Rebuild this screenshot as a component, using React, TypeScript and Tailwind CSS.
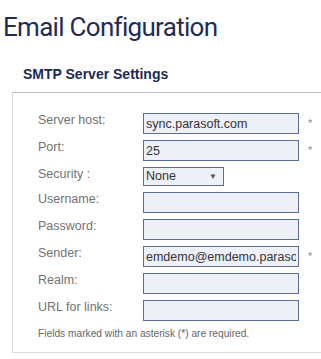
import React from 'react'

const fields = [
    { label: 'Server host:', value: 'sync.parasoft.com', required: true },
    { label: 'Port:', value: '25', required: true },
    { label: 'Security :', select: 'None' },
    { label: 'Username:', value: '' },
    { label: 'Password:', value: '' },
    { label: 'Sender:', value: 'emdemo@emdemo.parasoft.com', required: true },
    { label: 'Realm:', value: '' },
    { label: 'URL for links:', value: '' },
]

export default function App() {
    return (
        <div className="w-[321px] h-[359px] overflow-hidden bg-white font-['Liberation_Sans',Arial,sans-serif]">
            <h1 className="pt-[12px] pl-[3px] text-[26px] leading-[30px] tracking-[-0.7px] text-[#1f2d56] font-['Roboto',sans-serif] whitespace-nowrap">
                Email Configuration
            </h1>

            <h2 className="mt-[24px] pl-[23px] text-[14px] leading-[16px] font-bold text-[#1c2a52]">
                SMTP Server Settings
            </h2>

            {/* settings box */}
            <div className="mt-[10px] ml-[12px] w-[330px] border border-[#d9dbde] border-t-[#b9c0c9] pt-[20px] pl-[25px] pb-[12px]">
                <div className="flex flex-col gap-[6px]">
                    {fields.map((f) => (
                        <div key={f.label} className="flex items-start text-[12.5px] leading-[15px]">
                            <div className="w-[105px] text-[#727272] whitespace-nowrap">{f.label}</div>
                            {f.select ? (
                                <div className="w-[81px] h-[19px] border border-[#5d6c97] bg-[#eef0f8] flex items-center justify-between pl-[2px] pr-[6px] text-[#333333]">
                                    <span>{f.select}</span>
                                    <span className="text-[8px] text-[#555555]">▼</span>
                                </div>
                            ) : (
                                <input
                                    readOnly
                                    value={f.value}
                                    className="w-[156px] h-[21px] border border-[#5d6c97] bg-[#eef0f8] px-[2px] text-[12.5px] text-[#333333] outline-none"
                                />
                            )}
                            {f.required && <span className="ml-[9px] pt-[3px] text-[11px] text-[#8a8a8a]">*</span>}
                        </div>
                    ))}
                </div>
                <p className="mt-[7px] text-[10.2px] leading-[12px] text-[#666666]">
                    Fields marked with an asterisk (*) are required.
                </p>
            </div>
        </div>
    )
}
